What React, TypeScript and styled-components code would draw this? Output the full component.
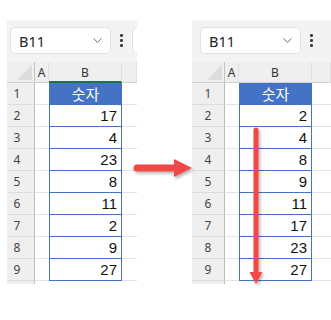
import React from "react";
import styled, { createGlobalStyle, css } from "styled-components";
import { ChevronDown } from "lucide-react";

const Global = createGlobalStyle`
  html, body { margin: 0; padding: 0; background: #ffffff; }
  body { font-family: "Noto Sans", "Noto Sans CJK KR", sans-serif; }
`;

const Page = styled.div`
  position: relative;
  width: 331px;
  height: 320px;
  display: flex;
  align-items: flex-start;
  padding: 20px 0 0 7px;
  box-sizing: border-box;
  gap: 55px;
`;

const Panel = styled.div<{ $w: number }>`
  width: ${(p) => p.$w}px;
  display: flex;
  flex-direction: column;
  background: #ffffff;
`;

const Toolbar = styled.div<{ $pad: number }>`
  height: 42px;
  background: #f3f3f3;
  display: flex;
  align-items: flex-start;
  padding: 7px 0 0 ${(p) => p.$pad}px;
  box-sizing: border-box;
  overflow: hidden;
`;

const NameBox = styled.div`
  width: 101px;
  height: 27px;
  box-sizing: border-box;
  background: #ffffff;
  border: 1px solid #e1e1e1;
  border-radius: 5px;
  display: flex;
  align-items: center;
  justify-content: space-between;
  padding: 0 5px 0 8px;
  font-family: "Noto Sans", sans-serif;
  font-size: 14.5px;
  color: #222;
  flex-shrink: 0;
`;

const Dots = styled.div`
  width: 21px;
  height: 27px;
  display: flex;
  flex-direction: column;
  align-items: center;
  justify-content: center;
  gap: 2.5px;
  flex-shrink: 0;
  span {
    width: 2.5px;
    height: 2.5px;
    border-radius: 50%;
    background: #3a3a3a;
  }
`;

const FormulaBox = styled.div`
  width: 40px;
  height: 27px;
  box-sizing: border-box;
  background: #ffffff;
  border: 1px solid #e1e1e1;
  border-radius: 5px;
  flex-shrink: 0;
`;

const Sheet = styled.div<{ $cols: string }>`
  display: grid;
  grid-template-columns: ${(p) => p.$cols};
  grid-template-rows: 21px repeat(9, 22px) 3px;
`;

type Kind = "corner" | "colhdr" | "rowhdr" | "blank" | "title" | "data";

const Cell = styled.div<{ $kind: Kind; $active?: boolean; $pr?: number }>`
  box-sizing: border-box;
  display: flex;
  align-items: center;
  position: relative;
  border-bottom: 1px solid #e3e3e3;
  ${(p) =>
    p.$kind === "corner" &&
    css`
      background: #efefef;
      border-bottom: 1px solid #d0d0d0;
      border-right: 1px solid #c4c4c4;
      &::after {
        content: "";
        position: absolute;
        right: 2px;
        bottom: 2px;
        width: 15px;
        height: 15px;
        background: #dcdcdc;
        clip-path: polygon(100% 0, 100% 100%, 0 100%);
      }
    `}
  ${(p) =>
    p.$kind === "colhdr" &&
    css`
      background: #efefef;
      justify-content: center;
      font-family: "Noto Sans", sans-serif;
      font-size: 12px;
      color: #333;
      border-bottom: ${p.$active ? "2px solid #217346" : "1px solid #d0d0d0"};
      border-right: 1px solid #e0e0e0;
      padding-top: 1px;
    `}
  ${(p) =>
    p.$kind === "rowhdr" &&
    css`
      background: #efefef;
      justify-content: center;
      font-family: "Noto Sans", sans-serif;
      font-size: 12px;
      color: #444;
      border-right: 1px solid #bdbdbd;
      border-bottom: 1px solid #dcdcdc;
      padding-right: ${p.$pr ?? 0}px;
    `}
  ${(p) =>
    p.$kind === "title" &&
    css`
      background: #4472c4;
      justify-content: center;
      color: #ffffff;
      font-family: "Noto Sans CJK KR", "Noto Sans", sans-serif;
      font-size: 15px;
      border-bottom: 1px solid #4472c4;
    `}
  ${(p) =>
    p.$kind === "data" &&
    css`
      justify-content: flex-end;
      padding-right: 4px;
      font-family: "Liberation Sans", Arial, sans-serif;
      font-size: 15px;
      color: #111;
      border-left: 1px solid #4472c4;
      border-right: 1px solid #4472c4;
      border-bottom: 1px solid #4472c4;
    `}
`;

const Filler = styled.div`
  background: #efefef;
  border-right: 1px solid #bdbdbd;
  box-sizing: border-box;
`;

const Overlay = styled.svg`
  position: absolute;
  left: 0;
  top: 0;
  pointer-events: none;
`;

type SheetProps = {
  cols: string;
  values: number[];
  activeB?: boolean;
  rowPadRight: number;
};

function SheetGrid({ cols, values, activeB, rowPadRight }: SheetProps) {
  return (
    <Sheet $cols={cols}>
      <Cell $kind="corner" />
      <Cell $kind="colhdr">A</Cell>
      <Cell $kind="colhdr" $active={activeB}>
        B
      </Cell>
      <Cell $kind="colhdr" />
      <Cell $kind="rowhdr" $pr={rowPadRight}>
        1
      </Cell>
      <Cell $kind="blank" />
      <Cell $kind="title">숫자</Cell>
      <Cell $kind="blank" />
      {values.map((v, i) => (
        <React.Fragment key={i}>
          <Cell $kind="rowhdr" $pr={rowPadRight}>
            {i + 2}
          </Cell>
          <Cell $kind="blank" />
          <Cell $kind="data">{v}</Cell>
          <Cell $kind="blank" />
        </React.Fragment>
      ))}
      <Filler />
    </Sheet>
  );
}

function Toolbox({ pad, formula }: { pad: number; formula?: boolean }) {
  return (
    <Toolbar $pad={pad}>
      <NameBox>
        <span>B11</span>
        <ChevronDown size={15} strokeWidth={1.4} color="#555" />
      </NameBox>
      <Dots>
        <span />
        <span />
        <span />
      </Dots>
      {formula && <FormulaBox />}
    </Toolbar>
  );
}

export default function App() {
  return (
    <>
      <Global />
      <Page>
        <Panel $w={130}>
          <Toolbox pad={3} formula />
          <SheetGrid
            cols="28px 14px 73px 15px"
            values={[17, 4, 23, 8, 11, 2, 9, 27]}
            activeB
            rowPadRight={7}
          />
        </Panel>
        <Panel $w={139}>
          <Toolbox pad={8} />
          <SheetGrid
            cols="33px 14px 73px 19px"
            values={[2, 4, 8, 9, 11, 17, 23, 27]}
            rowPadRight={0}
          />
        </Panel>
        <Overlay width={331} height={320} viewBox="0 0 331 320">
          <defs>
            <filter id="sh" x="-20%" y="-20%" width="140%" height="140%">
              <feDropShadow dx="1.5" dy="2" stdDeviation="1.5" floodColor="#000" floodOpacity="0.3" />
            </filter>
          </defs>
          <g filter="url(#sh)" fill="#f04646">
            <path d="M137 164.5 L174 164.5 L174 159 L192 168 L174 177 L174 171.5 L137 171.5 A3.5 3.5 0 0 1 137 164.5 Z" />
            <path d="M253.5 130 A2.5 2.5 0 0 1 258.5 130 L258.5 272 L262.5 272 L256 284 L249.5 272 L253.5 272 Z" />
          </g>
        </Overlay>
      </Page>
    </>
  );
}
